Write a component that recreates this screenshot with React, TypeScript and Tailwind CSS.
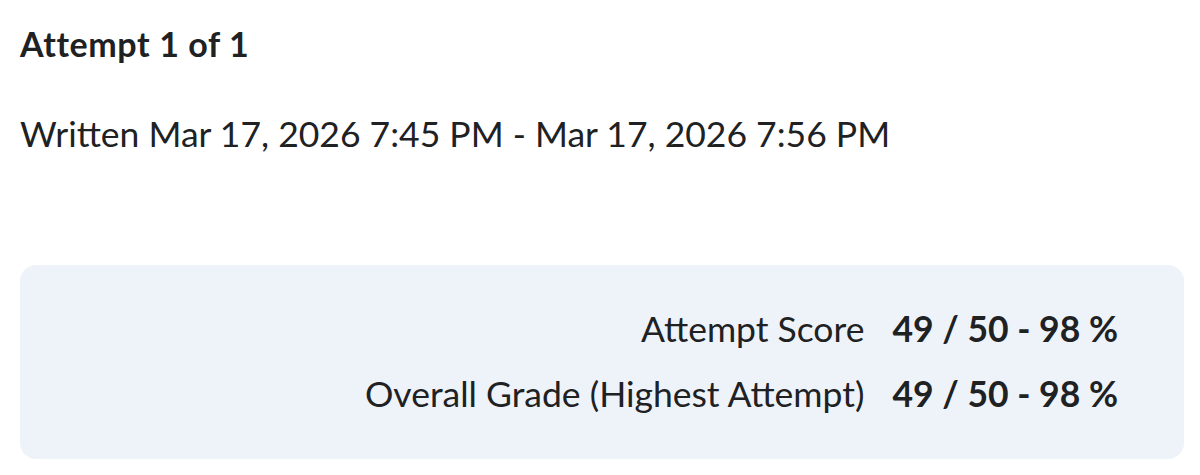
export default function App() {
  return (
    <div className="min-h-screen bg-white text-[#202122] font-['Lato','Noto_Sans',sans-serif] pl-5 pr-4 pt-6">
      <h2 className="text-[34px] font-bold leading-[40px] tracking-[0.6px]">Attempt 1 of 1</h2>
      <p className="mt-[50px] text-[35.5px] leading-[40px]">
        Written Mar 17, 2026 7:45 PM - Mar 17, 2026 7:56 PM
      </p>
      <div className="mt-[111px] h-[194px] rounded-2xl bg-[#eef3fa] flex items-center justify-end pr-[66px]">
        <div className="grid grid-cols-[auto_auto] gap-x-[28px] gap-y-[25px] text-[35.5px] leading-[40px] -mt-[2px]">
          <span className="text-right">Attempt Score</span>
          <span className="font-bold">49 / 50 - 98 %</span>
          <span className="text-right">Overall Grade (Highest Attempt)</span>
          <span className="font-bold">49 / 50 - 98 %</span>
        </div>
      </div>
    </div>
  );
}
